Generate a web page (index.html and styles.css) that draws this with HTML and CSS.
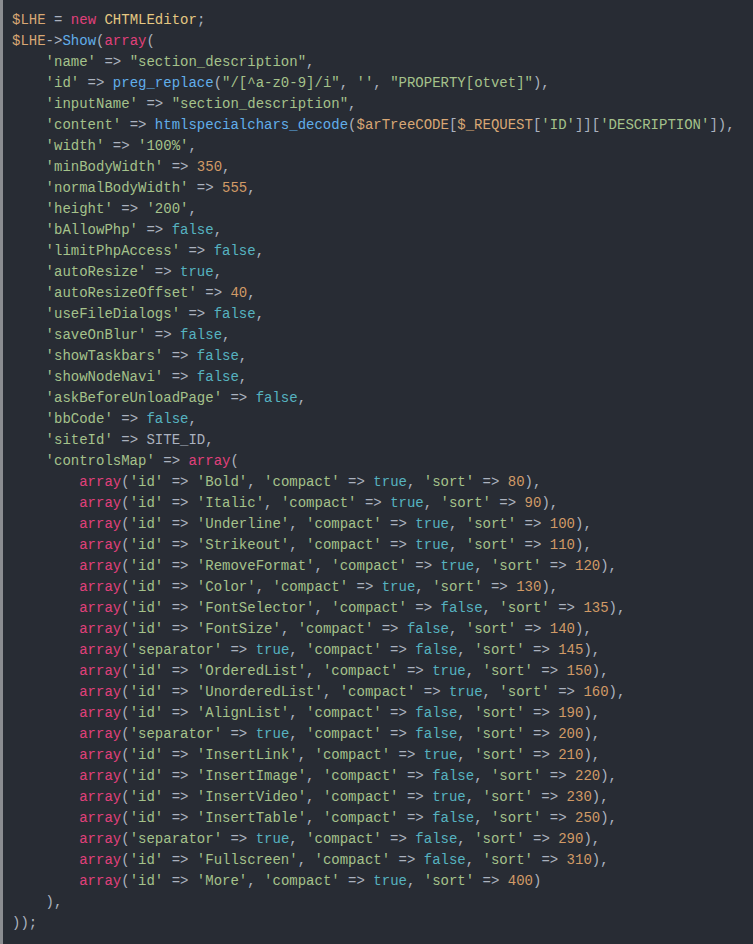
FILE: index.html
```html
<!DOCTYPE html>
<html>
<head>
<meta charset="utf-8">
<link rel="stylesheet" href="styles.css">
</head>
<body>
<div class="code">
<div class="ln"><span class="v">$LHE</span> = <span class="k">new</span> <span class="c">CHTMLEditor</span>;</div>
<div class="ln"><span class="v">$LHE</span>-&gt;<span class="f">Show</span>(<span class="k">array</span>(</div>
<div class="ln">    <span class="s">'name'</span> =&gt; <span class="s">"section_description"</span>,</div>
<div class="ln">    <span class="s">'id'</span> =&gt; <span class="f">preg_replace</span>(<span class="s">"/[^a-z0-9]/i"</span>, <span class="s">''</span>, <span class="s">"PROPERTY[otvet]"</span>),</div>
<div class="ln">    <span class="s">'inputName'</span> =&gt; <span class="s">"section_description"</span>,</div>
<div class="ln">    <span class="s">'content'</span> =&gt; <span class="f">htmlspecialchars_decode</span>(<span class="v">$arTreeCODE</span>[<span class="v">$_REQUEST</span>[<span class="s">'ID'</span>]][<span class="s">'DESCRIPTION'</span>]),</div>
<div class="ln">    <span class="s">'width'</span> =&gt; <span class="s">'100%'</span>,</div>
<div class="ln">    <span class="s">'minBodyWidth'</span> =&gt; <span class="n">350</span>,</div>
<div class="ln">    <span class="s">'normalBodyWidth'</span> =&gt; <span class="n">555</span>,</div>
<div class="ln">    <span class="s">'height'</span> =&gt; <span class="s">'200'</span>,</div>
<div class="ln">    <span class="s">'bAllowPhp'</span> =&gt; <span class="b">false</span>,</div>
<div class="ln">    <span class="s">'limitPhpAccess'</span> =&gt; <span class="b">false</span>,</div>
<div class="ln">    <span class="s">'autoResize'</span> =&gt; <span class="b">true</span>,</div>
<div class="ln">    <span class="s">'autoResizeOffset'</span> =&gt; <span class="n">40</span>,</div>
<div class="ln">    <span class="s">'useFileDialogs'</span> =&gt; <span class="b">false</span>,</div>
<div class="ln">    <span class="s">'saveOnBlur'</span> =&gt; <span class="b">false</span>,</div>
<div class="ln">    <span class="s">'showTaskbars'</span> =&gt; <span class="b">false</span>,</div>
<div class="ln">    <span class="s">'showNodeNavi'</span> =&gt; <span class="b">false</span>,</div>
<div class="ln">    <span class="s">'askBeforeUnloadPage'</span> =&gt; <span class="b">false</span>,</div>
<div class="ln">    <span class="s">'bbCode'</span> =&gt; <span class="b">false</span>,</div>
<div class="ln">    <span class="s">'siteId'</span> =&gt; SITE_ID,</div>
<div class="ln">    <span class="s">'controlsMap'</span> =&gt; <span class="k">array</span>(</div>
<div class="ln">        <span class="k">array</span>(<span class="s">'id'</span> =&gt; <span class="s">'Bold'</span>, <span class="s">'compact'</span> =&gt; <span class="b">true</span>, <span class="s">'sort'</span> =&gt; <span class="n">80</span>),</div>
<div class="ln">        <span class="k">array</span>(<span class="s">'id'</span> =&gt; <span class="s">'Italic'</span>, <span class="s">'compact'</span> =&gt; <span class="b">true</span>, <span class="s">'sort'</span> =&gt; <span class="n">90</span>),</div>
<div class="ln">        <span class="k">array</span>(<span class="s">'id'</span> =&gt; <span class="s">'Underline'</span>, <span class="s">'compact'</span> =&gt; <span class="b">true</span>, <span class="s">'sort'</span> =&gt; <span class="n">100</span>),</div>
<div class="ln">        <span class="k">array</span>(<span class="s">'id'</span> =&gt; <span class="s">'Strikeout'</span>, <span class="s">'compact'</span> =&gt; <span class="b">true</span>, <span class="s">'sort'</span> =&gt; <span class="n">110</span>),</div>
<div class="ln">        <span class="k">array</span>(<span class="s">'id'</span> =&gt; <span class="s">'RemoveFormat'</span>, <span class="s">'compact'</span> =&gt; <span class="b">true</span>, <span class="s">'sort'</span> =&gt; <span class="n">120</span>),</div>
<div class="ln">        <span class="k">array</span>(<span class="s">'id'</span> =&gt; <span class="s">'Color'</span>, <span class="s">'compact'</span> =&gt; <span class="b">true</span>, <span class="s">'sort'</span> =&gt; <span class="n">130</span>),</div>
<div class="ln">        <span class="k">array</span>(<span class="s">'id'</span> =&gt; <span class="s">'FontSelector'</span>, <span class="s">'compact'</span> =&gt; <span class="b">false</span>, <span class="s">'sort'</span> =&gt; <span class="n">135</span>),</div>
<div class="ln">        <span class="k">array</span>(<span class="s">'id'</span> =&gt; <span class="s">'FontSize'</span>, <span class="s">'compact'</span> =&gt; <span class="b">false</span>, <span class="s">'sort'</span> =&gt; <span class="n">140</span>),</div>
<div class="ln">        <span class="k">array</span>(<span class="s">'separator'</span> =&gt; <span class="b">true</span>, <span class="s">'compact'</span> =&gt; <span class="b">false</span>, <span class="s">'sort'</span> =&gt; <span class="n">145</span>),</div>
<div class="ln">        <span class="k">array</span>(<span class="s">'id'</span> =&gt; <span class="s">'OrderedList'</span>, <span class="s">'compact'</span> =&gt; <span class="b">true</span>, <span class="s">'sort'</span> =&gt; <span class="n">150</span>),</div>
<div class="ln">        <span class="k">array</span>(<span class="s">'id'</span> =&gt; <span class="s">'UnorderedList'</span>, <span class="s">'compact'</span> =&gt; <span class="b">true</span>, <span class="s">'sort'</span> =&gt; <span class="n">160</span>),</div>
<div class="ln">        <span class="k">array</span>(<span class="s">'id'</span> =&gt; <span class="s">'AlignList'</span>, <span class="s">'compact'</span> =&gt; <span class="b">false</span>, <span class="s">'sort'</span> =&gt; <span class="n">190</span>),</div>
<div class="ln">        <span class="k">array</span>(<span class="s">'separator'</span> =&gt; <span class="b">true</span>, <span class="s">'compact'</span> =&gt; <span class="b">false</span>, <span class="s">'sort'</span> =&gt; <span class="n">200</span>),</div>
<div class="ln">        <span class="k">array</span>(<span class="s">'id'</span> =&gt; <span class="s">'InsertLink'</span>, <span class="s">'compact'</span> =&gt; <span class="b">true</span>, <span class="s">'sort'</span> =&gt; <span class="n">210</span>),</div>
<div class="ln">        <span class="k">array</span>(<span class="s">'id'</span> =&gt; <span class="s">'InsertImage'</span>, <span class="s">'compact'</span> =&gt; <span class="b">false</span>, <span class="s">'sort'</span> =&gt; <span class="n">220</span>),</div>
<div class="ln">        <span class="k">array</span>(<span class="s">'id'</span> =&gt; <span class="s">'InsertVideo'</span>, <span class="s">'compact'</span> =&gt; <span class="b">true</span>, <span class="s">'sort'</span> =&gt; <span class="n">230</span>),</div>
<div class="ln">        <span class="k">array</span>(<span class="s">'id'</span> =&gt; <span class="s">'InsertTable'</span>, <span class="s">'compact'</span> =&gt; <span class="b">false</span>, <span class="s">'sort'</span> =&gt; <span class="n">250</span>),</div>
<div class="ln">        <span class="k">array</span>(<span class="s">'separator'</span> =&gt; <span class="b">true</span>, <span class="s">'compact'</span> =&gt; <span class="b">false</span>, <span class="s">'sort'</span> =&gt; <span class="n">290</span>),</div>
<div class="ln">        <span class="k">array</span>(<span class="s">'id'</span> =&gt; <span class="s">'Fullscreen'</span>, <span class="s">'compact'</span> =&gt; <span class="b">false</span>, <span class="s">'sort'</span> =&gt; <span class="n">310</span>),</div>
<div class="ln">        <span class="k">array</span>(<span class="s">'id'</span> =&gt; <span class="s">'More'</span>, <span class="s">'compact'</span> =&gt; <span class="b">true</span>, <span class="s">'sort'</span> =&gt; <span class="n">400</span>)</div>
<div class="ln">    ),</div>
<div class="ln">));</div>
</div>
</body>
</html>
```

FILE: styles.css
```css
html, body {
  margin: 0;
  padding: 0;
  background: #282c34;
  height: 100%;
}

.code {
  min-height: 100%;
  box-sizing: border-box;
  background: #282c34;
  border-left: 3px solid #8b8d91;
  padding: 10px 9px 8px;
  color: #abb2bf;
  font-family: "Liberation Mono", "DejaVu Sans Mono", monospace;
  font-size: 14px;
  line-height: 21px;
  overflow: hidden;
}

.ln {
  white-space: pre;
  height: 21px;
}

.v { color: #d8a774; }
.k { color: #e0407b; }
.c { color: #e5c882; }
.f { color: #61aeea; }
.s { color: #a5c28b; }
.n { color: #d19a66; }
.b { color: #56b3c0; }
```
